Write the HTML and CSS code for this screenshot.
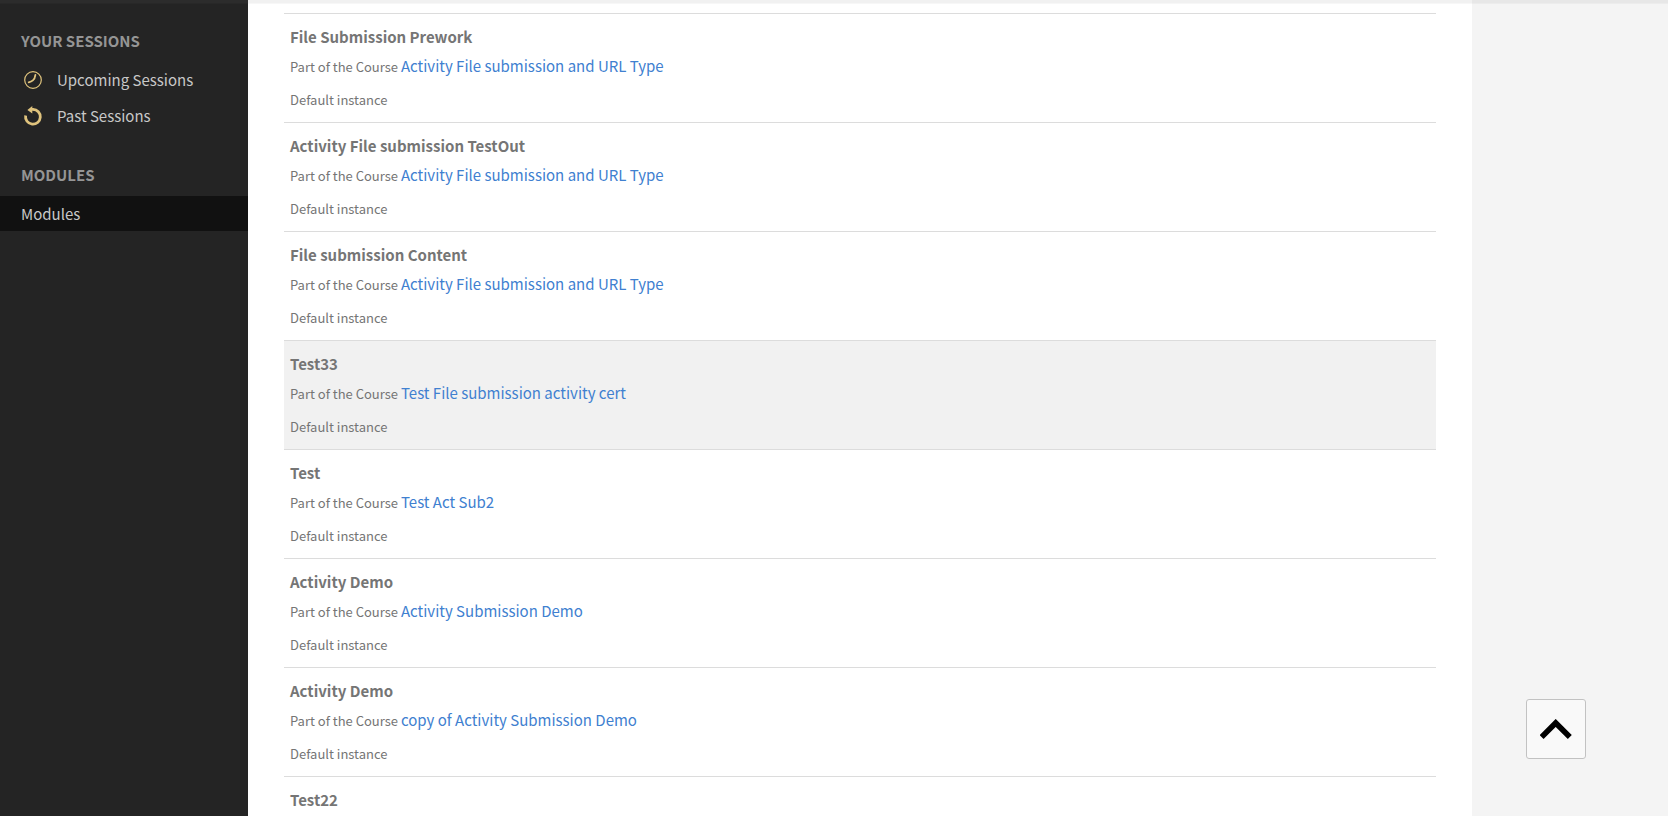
FILE: index.html
```html
<!DOCTYPE html>
<html lang="en">
<head>
    <meta charset="UTF-8">
    <meta name="viewport" content="width=device-width, initial-scale=1.0">
    <title>Modules</title>
    <link rel="stylesheet" href="styles.css">
</head>
<body>
    <div class="header-edge"></div>
    <div class="page">
        <nav class="sidebar">
            <section class="menu-group">
                <h2>Your Sessions</h2>
                <ul>
                    <li>
                        <a href="#upcoming">
                            <svg class="icon" viewBox="0 0 18 18" fill="none" stroke="currentColor">
                                <circle cx="9" cy="9" r="8.3" stroke-width="1.2"/>
                                <path d="M11.4 3.9 C11.1 6.5 10.3 8.2 8.9 9.4 C7.5 10.6 6.2 11 4.7 11.3" stroke-width="1.8" stroke-linecap="round"/>
                            </svg>
                            Upcoming Sessions
                        </a>
                    </li>
                    <li>
                        <a href="#past">
                            <svg class="icon" viewBox="0 0 18 18" fill="none" stroke="currentColor">
                                <path d="M1.6 8.6 A7.4 7.4 0 1 0 9 2.4" stroke-width="2.8"/>
                                <path d="M3.4 2.9 L8.3 -1 V1 H9.5 V3.8 H8.3 V6.6 Z" fill="currentColor" stroke="none"/>
                            </svg>
                            Past Sessions
                        </a>
                    </li>
                </ul>
            </section>
            <section class="menu-group">
                <h2>Modules</h2>
                <ul>
                    <li><a class="active" href="#modules">Modules</a></li>
                </ul>
            </section>
        </nav>

        <main class="content">
            <ul class="module-list">
                <li class="module">
                    <h3>File Submission Prework</h3>
                    <p class="course">Part of the Course <a href="#">Activity File submission and URL Type</a></p>
                    <p class="instance">Default instance</p>
                </li>
                <li class="module">
                    <h3>Activity File submission TestOut</h3>
                    <p class="course">Part of the Course <a href="#">Activity File submission and URL Type</a></p>
                    <p class="instance">Default instance</p>
                </li>
                <li class="module">
                    <h3>File submission Content</h3>
                    <p class="course">Part of the Course <a href="#">Activity File submission and URL Type</a></p>
                    <p class="instance">Default instance</p>
                </li>
                <li class="module selected">
                    <h3>Test33</h3>
                    <p class="course">Part of the Course <a href="#">Test File submission activity cert</a></p>
                    <p class="instance">Default instance</p>
                </li>
                <li class="module">
                    <h3>Test</h3>
                    <p class="course">Part of the Course <a href="#">Test Act Sub2</a></p>
                    <p class="instance">Default instance</p>
                </li>
                <li class="module">
                    <h3>Activity Demo</h3>
                    <p class="course">Part of the Course <a href="#">Activity Submission Demo</a></p>
                    <p class="instance">Default instance</p>
                </li>
                <li class="module">
                    <h3>Activity Demo</h3>
                    <p class="course">Part of the Course <a href="#">copy of Activity Submission Demo</a></p>
                    <p class="instance">Default instance</p>
                </li>
                <li class="module">
                    <h3>Test22</h3>
                </li>
            </ul>
        </main>
    </div>

    <button class="to-top" type="button" aria-label="Back to top">
        <svg viewBox="0 0 32 20" fill="none" stroke="#000" stroke-width="5.6">
            <path d="M1.6 18 L15.7 3.9 L29.8 18"/>
        </svg>
    </button>
</body>
</html>
```
FILE: styles.css
```css
* {
    box-sizing: border-box;
}

body {
    margin: 0;
    height: 100vh;
    overflow: hidden;
    background-color: #f4f4f4;
    color: #757575;
    font-family: "Source Sans Pro", "Noto Sans CJK SC", sans-serif;
    font-size: 15px;
    line-height: 24px;
}

h2, h3, p, ul {
    margin: 0;
    padding: 0;
}

ul {
    list-style: none;
}

a {
    text-decoration: none;
}

/* bottom edge of the header lying over the page */
.header-edge {
    position: fixed;
    top: 0;
    left: 0;
    right: 0;
    height: 3px;
    background-color: rgba(115, 115, 115, 0.1);
    box-shadow: 0 1px 0 rgba(115, 115, 115, 0.06);
    pointer-events: none;
    z-index: 5;
}

.page {
    display: flex;
    min-height: 100vh;
}

.sidebar {
    flex: 0 0 248px;
    padding-top: 29px;
    background-color: #242424;
}

.menu-group {
    margin-bottom: 30px;
}

.menu-group h2 {
    margin-bottom: 9px;
    padding-left: 21px;
    color: #959595;
    font-size: 15px;
    text-transform: uppercase;
}

.menu-group li {
    margin-bottom: 1px;
}

.menu-group a {
    display: flex;
    align-items: center;
    height: 35px;
    padding-left: 21px;
    color: #c8c8c8;
}

.menu-group a.active {
    background-color: #111;
}

.icon {
    width: 18px;
    height: 18px;
    margin: 0 15px 0 3px;
    color: #dfc37d;
    overflow: visible;
}

.content {
    flex: 1;
    margin-right: 196px;
    padding: 13px 36px 0;
    background-color: #fff;
}

.module {
    padding: 11px 6px 12px;
    border-top: 1px solid #dcdcdc;
}

.module.selected {
    background-color: #f1f1f1;
}

.module h3 {
    margin-bottom: 6px;
    font-size: 15px;
}

.course {
    margin-bottom: 11px;
    font-size: 13px;
}

.course a {
    color: #4080d0;
    font-size: 15px;
    line-height: 20px;
}

.instance {
    font-size: 13px;
    line-height: 20px;
}

.to-top {
    position: fixed;
    right: 82px;
    bottom: 57px;
    display: flex;
    align-items: center;
    justify-content: center;
    width: 60px;
    height: 60px;
    padding: 0;
    background-color: #f9f9f9;
    border: 1px solid #c2c2c2;
    border-radius: 3px;
    cursor: pointer;
}

.to-top svg {
    width: 32px;
    height: 20px;
}
```
